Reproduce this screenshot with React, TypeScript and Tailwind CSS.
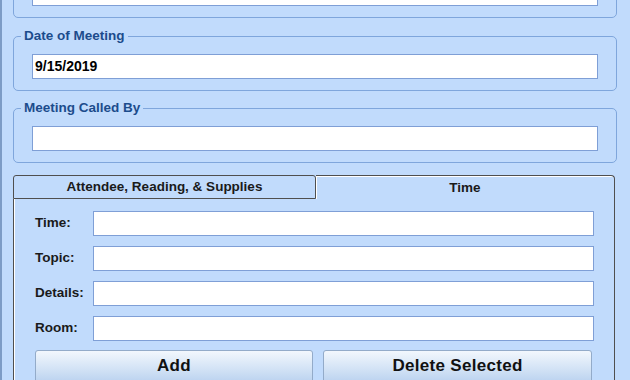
import React from "react";

function Group({ label, value }: { label?: string; value?: string }) {
  return (
    <div className="relative h-[55px] shrink-0 rounded-[5px] border border-[#7fa6dc] px-[18px] pt-[17px]">
      {label ? (
        <span className="absolute left-[7px] top-[-9px] bg-[#c1dbfc] px-[3px] text-[13.5px] font-bold leading-[16px] text-[#1c4c8c]">
          {label}
        </span>
      ) : null}
      <div className="flex h-[25px] items-center border border-[#7f9fd6] bg-white pl-[2px] text-[14px] font-bold text-black">
        {value}
      </div>
    </div>
  );
}

function Row({ label }: { label: string }) {
  return (
    <div className="flex h-[25px] items-center">
      <span className="w-[58px] text-[13.5px] font-bold text-[#1a1a1a]">{label}</span>
      <div className="h-[25px] flex-1 border border-[#7f9fd6] bg-white" />
    </div>
  );
}

export default function App() {
  return (
    <div className="flex h-[380px] w-[630px] overflow-hidden bg-[#c1dbfc] font-['Liberation_Sans',Arial,sans-serif]">
      <div className="w-[2px] shrink-0 bg-[#7d9cc6]" />
      <div className="flex flex-1 flex-col pl-[11px] pr-[13px]">
        <div className="mt-[-37px] flex flex-col">
          <Group />
          <div className="mt-[18px]">
            <Group label="Date of Meeting" value="9/15/2019" />
          </div>
          <div className="mt-[17px]">
            <Group label="Meeting Called By" />
          </div>
        </div>

        <div className="mt-[12px] flex w-[602px] flex-col">
          <div className="flex h-[24px]">
            <div className="flex h-[24px] w-[303px] items-center justify-center rounded-t-[3px] border border-[#4f4f4f] pt-[1px] text-[13.5px] font-bold text-[#1a1a1a]">
              Attendee, Reading, &amp; Supplies
            </div>
            <div className="flex h-[24px] flex-1 items-center justify-center rounded-tr-[4px] border-r border-t border-[#4f4f4f] pt-[2px] text-[13.5px] font-bold text-[#1a1a1a] shadow-[inset_1px_1px_0_#ffffff]">
              Time
            </div>
          </div>
          <div className="flex h-[200px] flex-col border-l border-r border-[#4f4f4f] pl-[21px] pr-[20px] pt-[12px] shadow-[inset_1px_0_0_#ffffff]">
            <div className="flex flex-col gap-[10px]">
              <Row label="Time:" />
              <Row label="Topic:" />
              <Row label="Details:" />
              <Row label="Room:" />
            </div>
            <div className="mt-[9px] flex gap-[10px]">
              <button className="flex h-[34px] w-[278px] items-center justify-center rounded-[3px] border border-[#93abc9] bg-gradient-to-b from-[#f2f7fd] via-[#d6e5f6] to-[#b9d1ef] pb-[3px] text-[17px] font-bold tracking-[0.3px] text-[#111]">
                Add
              </button>
              <button className="flex h-[34px] w-[269px] items-center justify-center rounded-[3px] border border-[#93abc9] bg-gradient-to-b from-[#f2f7fd] via-[#d6e5f6] to-[#b9d1ef] pb-[3px] text-[17px] font-bold tracking-[0.3px] text-[#111]">
                Delete Selected
              </button>
            </div>
          </div>
        </div>
      </div>
    </div>
  );
}
